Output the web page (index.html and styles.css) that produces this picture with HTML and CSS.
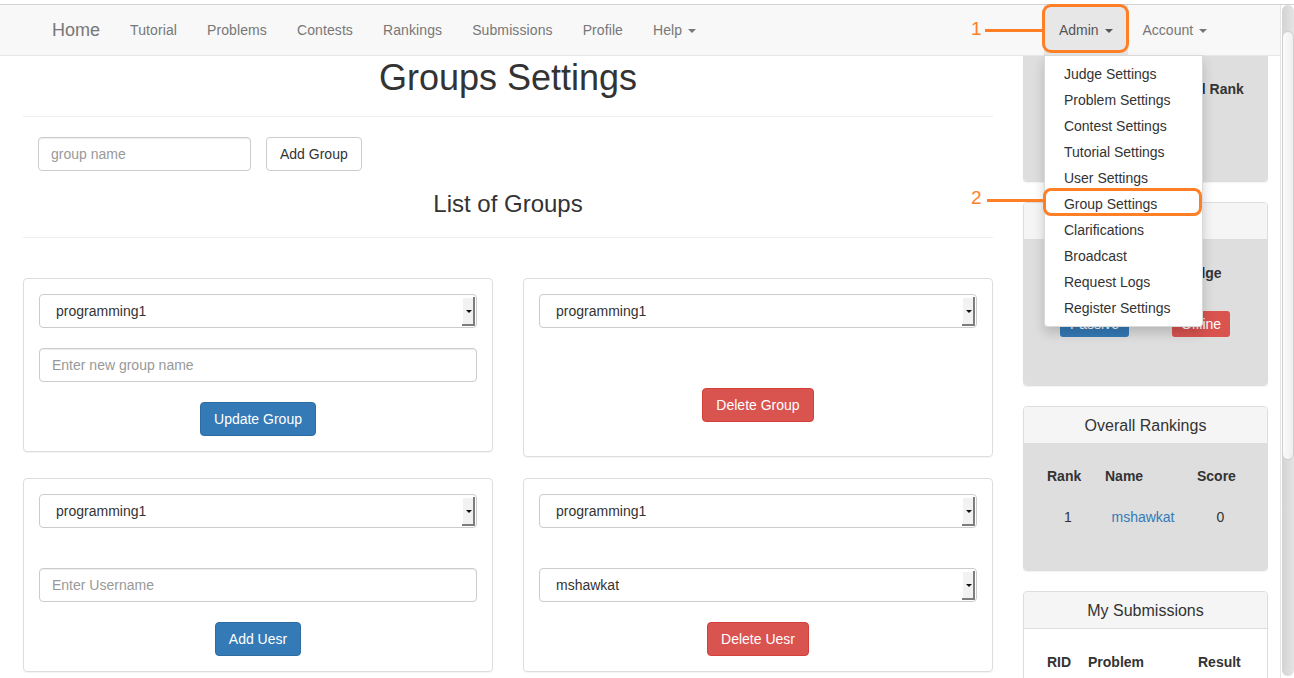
FILE: index.html
```html
<!DOCTYPE html>
<html>
<head>
<meta charset="utf-8">
<title>Groups Settings</title>
<link rel="stylesheet" href="styles.css">
</head>
<body>
<div class="topstrip"></div>
<div class="frame">
  <div class="page">
    <nav class="navbar">
      <a class="brand" href="#">Home</a>
      <ul class="nav">
        <li><a href="#">Tutorial</a></li>
        <li><a href="#">Problems</a></li>
        <li><a href="#">Contests</a></li>
        <li><a href="#">Rankings</a></li>
        <li><a href="#">Submissions</a></li>
        <li><a href="#">Profile</a></li>
        <li><a href="#">Help <span class="caret"></span></a></li>
      </ul>
      <ul class="nav nav-right">
        <li class="open"><a href="#">Admin <span class="caret"></span></a>
          <ul class="dropdown">
            <li><a href="#">Judge Settings</a></li>
            <li><a href="#">Problem Settings</a></li>
            <li><a href="#">Contest Settings</a></li>
            <li><a href="#">Tutorial Settings</a></li>
            <li><a href="#">User Settings</a></li>
            <li><a href="#">Group Settings</a></li>
            <li><a href="#">Clarifications</a></li>
            <li><a href="#">Broadcast</a></li>
            <li><a href="#">Request Logs</a></li>
            <li><a href="#">Register Settings</a></li>
          </ul>
        </li>
        <li><a href="#">Account <span class="caret"></span></a></li>
      </ul>
    </nav>

    <div class="content">
      <main class="main">
        <h1 class="title">Groups Settings</h1>
        <hr class="rule rule-1">
        <div class="add-form">
          <input class="input input-name" type="text" placeholder="group name">
          <button class="btn btn-default">Add Group</button>
        </div>
        <h3 class="subtitle">List of Groups</h3>
        <hr class="rule rule-2">

        <div class="grid">
          <div class="card">
            <div class="select"><span class="val">programming1</span><span class="arrow"></span></div>
            <input class="input gap-20" type="text" placeholder="Enter new group name">
            <div class="btn-row gap-20"><button class="btn btn-primary">Update Group</button></div>
          </div>
          <div class="card">
            <div class="select"><span class="val">programming1</span><span class="arrow"></span></div>
            <div class="btn-row gap-60 pad-bottom"><button class="btn btn-danger">Delete Group</button></div>
          </div>
          <div class="card">
            <div class="select"><span class="val">programming1</span><span class="arrow"></span></div>
            <input class="input gap-40" type="text" placeholder="Enter Username">
            <div class="btn-row gap-20"><button class="btn btn-primary">Add Uesr</button></div>
          </div>
          <div class="card">
            <div class="select"><span class="val">programming1</span><span class="arrow"></span></div>
            <div class="select gap-40"><span class="val">mshawkat</span><span class="arrow"></span></div>
            <div class="btn-row gap-20"><button class="btn btn-danger">Delete Uesr</button></div>
          </div>
        </div>
      </main>

      <aside class="side">
        <div class="panel panel-cut">
          <div class="panel-body gray body-1">
            <table class="tbl two-col">
              <thead><tr><th>Contest Rank</th><th>Overall Rank</th></tr></thead>
            </table>
          </div>
        </div>

        <div class="panel">
          <div class="panel-heading">Judge Status</div>
          <div class="panel-body gray body-2">
            <table class="tbl two-col">
              <thead><tr><th>Mode</th><th>Judge</th></tr></thead>
              <tbody><tr><td><span class="tag tag-blue">Passive</span></td><td><span class="tag tag-red">Offline</span></td></tr></tbody>
            </table>
          </div>
        </div>

        <div class="panel">
          <div class="panel-heading">Overall Rankings</div>
          <div class="panel-body gray body-3">
            <table class="tbl rank-tbl">
              <colgroup><col class="c1"><col class="c2"><col class="c3"></colgroup>
              <thead><tr><th>Rank</th><th>Name</th><th>Score</th></tr></thead>
              <tbody><tr><td>1</td><td><a class="link" href="#">mshawkat</a></td><td>0</td></tr></tbody>
            </table>
          </div>
        </div>

        <div class="panel">
          <div class="panel-heading">My Submissions</div>
          <div class="panel-body">
            <table class="tbl sub-tbl">
              <colgroup><col class="s1"><col class="s2"><col class="s3"></colgroup>
              <thead><tr><th>RID</th><th>Problem</th><th>Result</th></tr></thead>
            </table>
          </div>
        </div>
      </aside>
    </div>
  </div>
  <div class="scrollbar"><div class="thumb"></div></div>
</div>

<div class="annot-box box-1"></div>
<div class="annot-line line-1"></div>
<div class="annot-num num-1">1</div>
<div class="annot-box box-2"></div>
<div class="annot-line line-2"></div>
<div class="annot-num num-2">2</div>
</body>
</html>
```

FILE: styles.css
```css
* { box-sizing: border-box; }

html, body {
  margin: 0;
  padding: 0;
  height: 678px;
  overflow: hidden;
  background: #fff;
}

body {
  font-family: "Liberation Sans", Arial, Helvetica, sans-serif;
  font-size: 14px;
  line-height: 20px;
  color: #333;
  position: relative;
}

a { text-decoration: none; color: inherit; }
ul { list-style: none; margin: 0; padding: 0; }

.topstrip {
  height: 5px;
  background: #fff;
  border-bottom: 1px solid #d2d2d2;
}

.frame {
  display: flex;
  height: 673px;
}

.page {
  width: 1280px;
  flex: none;
  overflow: hidden;
}

/* navbar */
.navbar {
  display: flex;
  align-items: stretch;
  height: 51px;
  background: #f8f8f8;
  border-bottom: 1px solid #e7e7e7;
  padding-left: 37px;
  padding-right: 58px;
  position: relative;
  z-index: 5;
}

.brand {
  font-size: 18px;
  line-height: 20px;
  padding: 15px;
  color: #777;
}

.nav { display: flex; }
.nav > li { position: relative; }
.nav > li > a {
  display: block;
  padding: 15px;
  line-height: 20px;
  color: #777;
  letter-spacing: 0.1px;
}

.nav-right { margin-left: auto; }
.nav-right > li > a { letter-spacing: 0; }
.nav-right > li.open > a {
  background: #e7e7e7;
  color: #555;
}

.caret {
  display: inline-block;
  width: 0;
  height: 0;
  margin-left: 2px;
  vertical-align: middle;
  border-top: 4px solid;
  border-left: 4px solid transparent;
  border-right: 4px solid transparent;
}

.dropdown {
  position: absolute;
  top: 100%;
  left: 0;
  width: 159px;
  padding: 5px 0;
  background: #fff;
  border: 1px solid rgba(0, 0, 0, 0.15);
  border-radius: 0 0 4px 4px;
  box-shadow: 0 6px 12px rgba(0, 0, 0, 0.175);
  z-index: 10;
}
.dropdown li a {
  display: block;
  padding: 3px 19px;
  line-height: 20px;
  color: #333;
  white-space: nowrap;
}

/* content */
.content {
  display: flex;
  align-items: flex-start;
  padding-left: 23px;
}

.main { width: 970px; flex: none; }

.title {
  margin: 2px 0 0;
  font-size: 36px;
  line-height: 40px;
  font-weight: 500;
  text-align: center;
}

.rule {
  border: 0;
  border-top: 1px solid #eee;
  margin: 0;
}
.rule-1 { margin-top: 18px; }
.rule-2 { margin-top: 20px; }

.add-form {
  display: flex;
  gap: 15px;
  margin-top: 20px;
  padding-left: 15px;
}

.input {
  display: block;
  width: 100%;
  height: 34px;
  padding: 6px 12px;
  font-family: inherit;
  font-size: 14px;
  color: #555;
  background: #fff;
  border: 1px solid #ccc;
  border-radius: 4px;
  box-shadow: inset 0 1px 1px rgba(0, 0, 0, 0.075);
}
.input::placeholder { color: #999; }
.input-name { width: 213px; }

.subtitle {
  margin: 20px 0 0;
  font-size: 24px;
  line-height: 26px;
  font-weight: 500;
  text-align: center;
}

.btn {
  display: inline-block;
  height: 34px;
  padding: 6px 13px;
  font-family: inherit;
  font-size: 14px;
  line-height: 20px;
  border: 1px solid transparent;
  border-radius: 4px;
  cursor: pointer;
}
.btn-default { background: #fff; border-color: #ccc; color: #333; }
.btn-primary { background: #337ab7; border-color: #2e6da4; color: #fff; }
.btn-danger { background: #d9534f; border-color: #d43f3a; color: #fff; }

.grid {
  margin-top: 40px;
  display: grid;
  grid-template-columns: 470px 470px;
  column-gap: 30px;
  row-gap: 21px;
  align-items: start;
}

.card {
  border: 1px solid #ddd;
  border-radius: 4px;
  padding: 15px;
  box-shadow: 0 1px 1px rgba(0, 0, 0, 0.05);
}

.gap-20 { margin-top: 20px; }
.gap-40 { margin-top: 40px; }
.gap-60 { margin-top: 60px; }
.pad-bottom { margin-bottom: 19px; }

.btn-row { text-align: center; }

.select {
  display: flex;
  align-items: stretch;
  height: 34px;
  border: 1px solid #ccc;
  border-radius: 4px;
  background: #fff;
  padding: 2px 1px 1px 16px;
}
.select .val {
  flex: 1;
  line-height: 29px;
  color: #333;
}
.select .arrow {
  width: 13px;
  background: #f2f2f2;
  box-shadow: inset -2px -2px 0 #7d7d7d, inset 1px 1px 0 #fff;
  position: relative;
}
.select .arrow::after {
  content: "";
  position: absolute;
  left: 4px;
  top: 13px;
  border-top: 3px solid #111;
  border-left: 3px solid transparent;
  border-right: 3px solid transparent;
}

/* sidebar */
.side {
  width: 245px;
  flex: none;
  margin-left: 30px;
}

.panel {
  border: 1px solid #ddd;
  border-radius: 4px;
  margin-bottom: 20px;
  background: #fff;
  overflow: hidden;
  box-shadow: 0 1px 1px rgba(0, 0, 0, 0.05);
}
.panel-cut {
  border-top: 0;
  border-radius: 0 0 4px 4px;
  margin-bottom: 20px;
}

.panel-heading {
  background: #f5f5f5;
  border-bottom: 1px solid #ddd;
  padding: 10px 15px 9px;
  font-size: 16px;
  line-height: 17px;
  text-align: center;
}

.panel-body { padding: 15px; }
.panel-body.gray { background: #dedede; }
.body-1 { height: 125px; }
.body-2 { height: 145px; }
.body-3 { height: 126px; }

.tbl {
  width: 100%;
  border-collapse: collapse;
  table-layout: fixed;
}
.tbl th {
  font-weight: bold;
  text-align: left;
  padding: 8px;
  line-height: 20px;
}
.tbl td {
  padding: 12px 8px 10px;
  text-align: center;
  line-height: 20px;
}

.two-col th, .two-col td { text-align: center; white-space: nowrap; }
.two-col th:first-child { width: 111px; }
.body-2 td { padding: 20px 0 10px; }

.tag {
  display: inline-block;
  padding: 3px 10px;
  line-height: 20px;
  color: #fff;
  border-radius: 3px;
}
.tag-blue { background: #337ab7; }
.tag-red { background: #d9534f; padding: 3px 9px; }

.rank-tbl .c1 { width: 58px; }
.rank-tbl .c2 { width: 92px; }
.rank-tbl th { padding: 7px 8px 9px; }
.sub-tbl .s1 { width: 41px; }
.sub-tbl .s2 { width: 110px; }
.sub-tbl th { white-space: nowrap; }

.link { color: #337ab7; }

/* scrollbar */
.scrollbar {
  width: 14px;
  flex: none;
  border-left: 1px solid #e6e6e6;
  padding: 0 0 2px 1px;
  display: flex;
  background: #fff;
}
.thumb {
  width: 12px;
  height: 100%;
  border-radius: 6px;
  background: linear-gradient(to right, #d3d3d3, #e4e4e4);
  position: relative;
}
.thumb::after {
  content: "";
  position: absolute;
  left: 0;
  right: 0;
  top: 26px;
  height: 427px;
  border-radius: 6px;
  border: 1px solid #cfcfcf;
  background: linear-gradient(to right, #fbfbfb, #efefef);
}

/* annotations */
.annot-box {
  position: absolute;
  border: 3px solid #ff7f27;
  border-radius: 9px;
  z-index: 20;
}
.box-1 { left: 1042px; top: 4px; width: 87px; height: 49px; }
.box-2 { left: 1043px; top: 188px; width: 159px; height: 28px; border-radius: 8px; }

.annot-line {
  position: absolute;
  height: 3px;
  background: #ff7f27;
  z-index: 20;
}
.line-1 { left: 985px; top: 29px; width: 58px; }
.line-2 { left: 987px; top: 199px; width: 57px; }

.annot-num {
  position: absolute;
  font-size: 19px;
  line-height: 20px;
  color: #ff7f27;
  z-index: 20;
}
.num-1 { left: 971px; top: 19px; }
.num-2 { left: 971px; top: 188px; }
```
